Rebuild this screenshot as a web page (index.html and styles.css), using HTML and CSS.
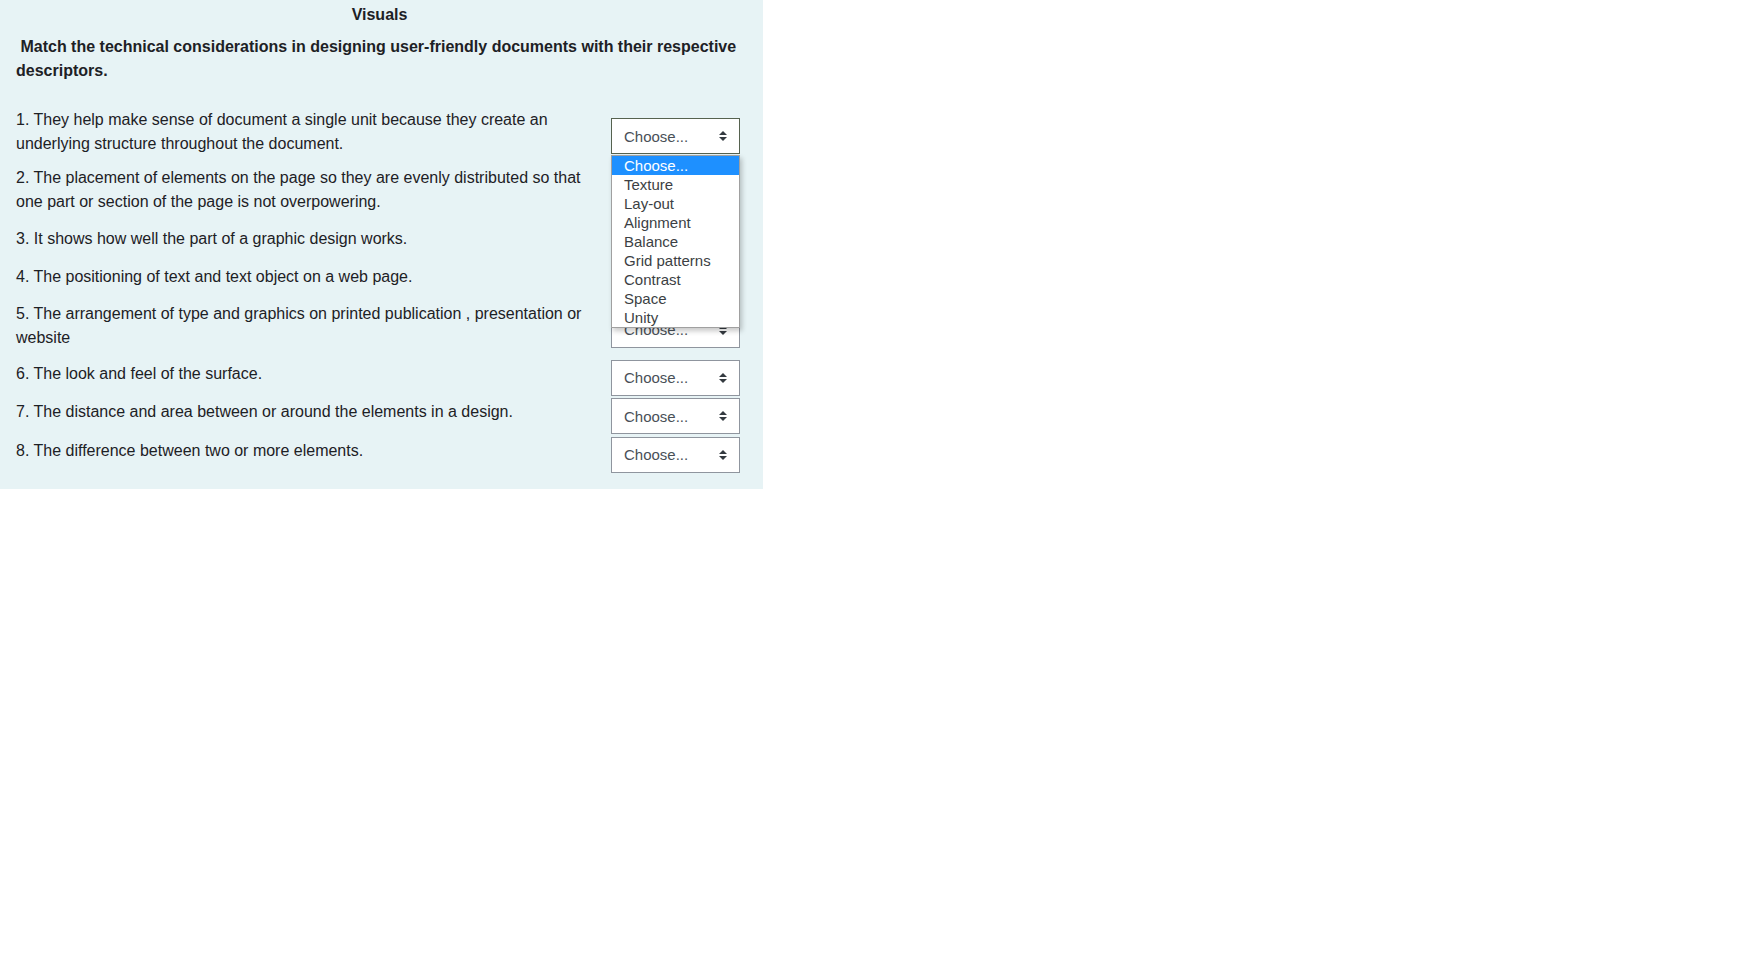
FILE: index.html
```html
<!DOCTYPE html>
<html lang="en">
<head>
<meta charset="utf-8">
<title>Visuals</title>
<link rel="stylesheet" href="styles.css">
</head>
<body>
<div class="panel">
  <h2 class="title">Visuals</h2>
  <p class="prompt">&nbsp;Match the technical considerations in designing user-friendly documents with their respective descriptors.</p>
  <div class="rows">
    <div class="row">
      <div class="q">1. They help make sense of document a single unit because they create an underlying structure throughout the document.</div>
      <div class="ctl">
        <div class="select focused"><span>Choose...</span><svg class="caret" viewBox="0 0 4 5" width="8" height="10"><path d="M2 0L0 2h4zm0 5L0 3h4z" fill="#343a40"/></svg></div>
        <ul class="popup">
          <li class="sel">Choose...</li>
          <li>Texture</li>
          <li>Lay-out</li>
          <li>Alignment</li>
          <li>Balance</li>
          <li>Grid patterns</li>
          <li>Contrast</li>
          <li>Space</li>
          <li>Unity</li>
        </ul>
      </div>
    </div>
    <div class="row">
      <div class="q">2. The placement of elements on the page so they are evenly distributed so that one part or section of the page is not overpowering.</div>
      <div class="ctl"><div class="select"><span>Choose...</span><svg class="caret" viewBox="0 0 4 5" width="8" height="10"><path d="M2 0L0 2h4zm0 5L0 3h4z" fill="#343a40"/></svg></div></div>
    </div>
    <div class="row">
      <div class="q">3. It shows how well the part of a graphic design works.</div>
      <div class="ctl"><div class="select"><span>Choose...</span><svg class="caret" viewBox="0 0 4 5" width="8" height="10"><path d="M2 0L0 2h4zm0 5L0 3h4z" fill="#343a40"/></svg></div></div>
    </div>
    <div class="row">
      <div class="q">4. The positioning of text and text object on a web page.</div>
      <div class="ctl"><div class="select"><span>Choose...</span><svg class="caret" viewBox="0 0 4 5" width="8" height="10"><path d="M2 0L0 2h4zm0 5L0 3h4z" fill="#343a40"/></svg></div></div>
    </div>
    <div class="row">
      <div class="q">5. The arrangement of type and graphics on printed publication , presentation or website</div>
      <div class="ctl"><div class="select"><span>Choose...</span><svg class="caret" viewBox="0 0 4 5" width="8" height="10"><path d="M2 0L0 2h4zm0 5L0 3h4z" fill="#343a40"/></svg></div></div>
    </div>
    <div class="row">
      <div class="q">6. The look and feel of the surface.</div>
      <div class="ctl"><div class="select"><span>Choose...</span><svg class="caret" viewBox="0 0 4 5" width="8" height="10"><path d="M2 0L0 2h4zm0 5L0 3h4z" fill="#343a40"/></svg></div></div>
    </div>
    <div class="row">
      <div class="q">7. The distance and area between or around the elements in a design.</div>
      <div class="ctl"><div class="select"><span>Choose...</span><svg class="caret" viewBox="0 0 4 5" width="8" height="10"><path d="M2 0L0 2h4zm0 5L0 3h4z" fill="#343a40"/></svg></div></div>
    </div>
    <div class="row">
      <div class="q">8. The difference between two or more elements.</div>
      <div class="ctl"><div class="select"><span>Choose...</span><svg class="caret" viewBox="0 0 4 5" width="8" height="10"><path d="M2 0L0 2h4zm0 5L0 3h4z" fill="#343a40"/></svg></div></div>
    </div>
  </div>
</div>
</body>
</html>
```

FILE: styles.css
```css
html, body {
  margin: 0;
  padding: 0;
  background: #ffffff;
}

body {
  font-family: "Liberation Sans", Arial, sans-serif;
  color: #1d2125;
}

.panel {
  width: 763px;
  box-sizing: border-box;
  background: #e7f3f5;
  padding: 3px 20px 16px 16px;
}

.title {
  margin: 0;
  font-size: 16px;
  line-height: 24px;
  font-weight: bold;
  text-align: center;
}

.prompt {
  margin: 8px 0 0 0;
  font-size: 16px;
  line-height: 24px;
  font-weight: bold;
}

.rows {
  margin-top: 25px;
  display: flex;
  flex-direction: column;
  gap: 2.4px;
}

.row {
  display: grid;
  grid-template-columns: 587px 129px;
  column-gap: 8px;
  align-items: center;
}

.q {
  font-size: 16px;
  line-height: 24px;
  color: #1d2125;
  padding-bottom: 8px;
}

.ctl {
  position: relative;
}

.select {
  height: 36px;
  box-sizing: border-box;
  border: 1px solid #8f959e;
  background: #ffffff;
  display: flex;
  align-items: center;
  justify-content: space-between;
  padding: 0 12px;
  font-size: 15px;
  color: #495057;
}

.select.focused {
  border-color: #56624f;
}

.caret {
  display: block;
}

.popup {
  position: absolute;
  z-index: 5;
  left: 0;
  top: 37px;
  width: 129px;
  box-sizing: border-box;
  margin: 0;
  padding: 0;
  list-style: none;
  background: #ffffff;
  border: 1px solid #a0a0a0;
  box-shadow: 2px 3px 5px rgba(0, 0, 0, 0.22);
}

.popup li {
  font-size: 15px;
  line-height: 19px;
  padding-left: 12px;
  color: #3c3f44;
  white-space: nowrap;
}

.popup li.sel {
  background: #1e90ff;
  color: #ffffff;
}
```
